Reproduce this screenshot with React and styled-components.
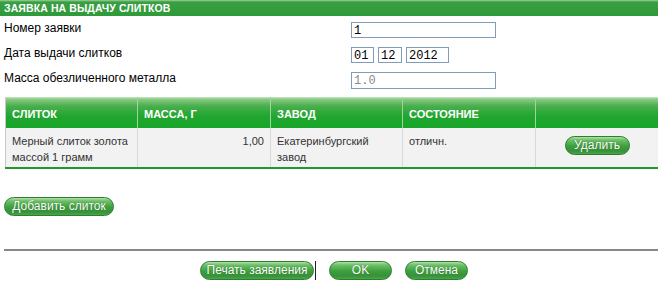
import styled, { createGlobalStyle } from 'styled-components'

const GlobalStyle = createGlobalStyle`
  html, body {
    margin: 0;
    padding: 0;
    background: #fff;
  }
  body {
    font-family: "Liberation Sans", Arial, sans-serif;
    color: #000;
  }
`

const rows = [
  { name: 'Мерный слиток золота массой 1 грамм', mass: '1,00', plant: 'Екатеринбургский завод', state: 'отличн.' },
]

const App = () => {
  return (
    <Page>
      <GlobalStyle />
      <TitleBar>Заявка на выдачу слитков</TitleBar>

      <Form>
        <Label>Номер заявки</Label>
        <Field>
          <Input type="text" defaultValue="1" $width={145} />
        </Field>

        <Label>Дата выдачи слитков</Label>
        <Field>
          <Input type="text" defaultValue="01" $width={23} />
          <Input type="text" defaultValue="12" $width={24} />
          <Input type="text" defaultValue="2012" $width={43} />
        </Field>

        <Label>Масса обезличенного металла</Label>
        <Field>
          <Input type="text" defaultValue="1.0" $width={145} $height={17} disabled />
        </Field>
      </Form>

      <Table>
        <colgroup>
          <col style={{ width: 132 }} />
          <col style={{ width: 133 }} />
          <col style={{ width: 132 }} />
          <col style={{ width: 133 }} />
          <col />
        </colgroup>
        <thead>
          <tr>
            <Th>Слиток</Th>
            <Th>Масса, г</Th>
            <Th>Завод</Th>
            <Th>Состояние</Th>
            <Th />
          </tr>
        </thead>
        <tbody>
          {rows.map((r, i) => (
            <tr key={i}>
              <Td>{r.name}</Td>
              <Td $align="right">{r.mass}</Td>
              <Td>{r.plant}</Td>
              <Td>{r.state}</Td>
              <ActionCell>
                <Button $width={65}>Удалить</Button>
              </ActionCell>
            </tr>
          ))}
        </tbody>
      </Table>

      <AddRow>
        <Button $width={110}>Добавить слиток</Button>
      </AddRow>

      <Divider />

      <Footer>
        <Button $width={114}>Печать заявления</Button>
        <Caret />
        <Button $width={63}>OK</Button>
        <Button $width={63}>Отмена</Button>
      </Footer>
    </Page>
  )
}

const Page = styled.div`
  width: 658px;
  height: 292px;
  overflow: hidden;
`

const TitleBar = styled.div`
  height: 16px;
  box-sizing: border-box;
  padding: 2px 0 0 4px;
  background: linear-gradient(#9fd09f 0, #3a9f42 2px, #2e9a3a 100%);
  color: #fff;
  font-size: 10.5px;
  font-weight: bold;
  line-height: 13px;
  text-transform: uppercase;
  letter-spacing: 0.1px;
`

const Form = styled.div`
  display: grid;
  grid-template-columns: 347px 1fr;
  row-gap: 9px;
  padding: 6px 0 0 4px;
`

const Label = styled.div`
  font-size: 12px;
  line-height: 14px;
  margin-top: -1px;
  color: #000;
`

const Field = styled.div`
  display: flex;
  gap: 4px;
`

const Input = styled.input`
  box-sizing: border-box;
  width: ${p => p.$width}px;
  height: ${p => p.$height || 16}px;
  margin: 0;
  padding: 1px 2px 0;
  border: 1px solid #7f9db9;
  background: #fff;
  font-family: "Liberation Mono", "Courier New", monospace;
  font-size: 12px;
  color: #000;
  outline: none;

  &:disabled {
    color: #8a8a8a;
    background: #fff;
  }
`

const Table = styled.table`
  margin: 8px 0 0 5px;
  width: 653px;
  border-collapse: collapse;
  table-layout: fixed;
  border-left: 1px solid #c9c9c9;
  border-bottom: 2px solid #1e9a2c;
`

const Th = styled.th`
  height: 31px;
  box-sizing: border-box;
  padding: 11px 6px 0;
  text-align: left;
  vertical-align: top;
  background: linear-gradient(#cfe8c9 0, #8ccb86 2px, #49ae4d 9px, #1fa52e 20px, #17a62a 100%);
  border-left: 1px solid #9fd49a;
  color: #fff;
  font-size: 11px;
  font-weight: bold;
  text-transform: uppercase;

  &:first-child {
    border-left: none;
  }
`

const Td = styled.td`
  height: 40px;
  box-sizing: border-box;
  padding: 5px 6px 0;
  vertical-align: top;
  text-align: ${p => p.$align || 'left'};
  background: #f2f2f2;
  border-left: 1px solid #d9d9d9;
  font-size: 11px;
  line-height: 16px;
  color: #333;

  &:first-child {
    border-left: none;
  }
`

const ActionCell = styled(Td)`
  text-align: center;
  padding-top: 8px;
`

const Button = styled.button`
  width: ${p => p.$width}px;
  height: 19px;
  box-sizing: border-box;
  margin: 0;
  padding: 0;
  border: 1px solid #2f7d2f;
  border-radius: 10px;
  background: linear-gradient(#b4dfae 0, #6cc168 3px, #3f9f3d 9px, #36913a 14px, #4aa64a 100%);
  color: #fff;
  font-family: "Liberation Sans", Arial, sans-serif;
  font-size: 12px;
  line-height: 17px;
  text-shadow: 0 0 1px #1f5a1f;
  cursor: pointer;
`

const AddRow = styled.div`
  padding: 27px 0 0 4px;
`

const Divider = styled.div`
  margin: 33px 0 0 4px;
  height: 2px;
  background: #888;
`

const Footer = styled.div`
  display: flex;
  align-items: center;
  padding: 10px 0 0 200px;
  gap: 13px;

  & > :first-child {
    margin-right: -12px;
  }
`

const Caret = styled.span`
  width: 1px;
  height: 19px;
  background: #222;
`

export default App
